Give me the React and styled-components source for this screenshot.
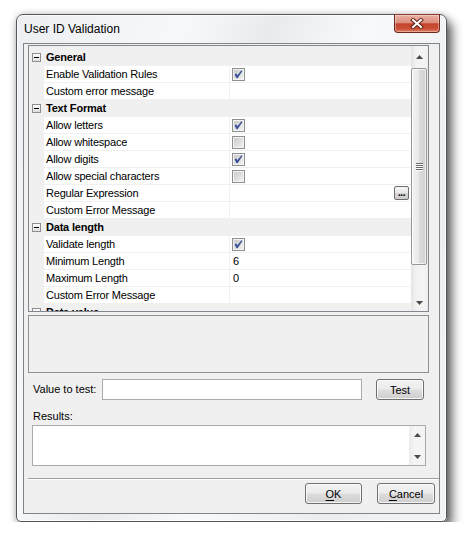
import React from "react";
import styled, { createGlobalStyle } from "styled-components";

const GlobalStyle = createGlobalStyle`
  html, body {
    margin: 0;
    background: #ffffff;
  }
  body {
    font-family: "Liberation Sans", Arial, sans-serif;
    font-size: 11px;
    color: #000;
  }
  * {
    box-sizing: border-box;
  }
`;

const sections = [
  {
    title: "General",
    rows: [
      { name: "Enable Validation Rules", type: "check", checked: true },
      { name: "Custom error message" },
    ],
  },
  {
    title: "Text Format",
    rows: [
      { name: "Allow letters", type: "check", checked: true },
      { name: "Allow whitespace", type: "check", checked: false },
      { name: "Allow digits", type: "check", checked: true },
      { name: "Allow special characters", type: "check", checked: false },
      { name: "Regular Expression", type: "ellipsis" },
      { name: "Custom Error Message" },
    ],
  },
  {
    title: "Data length",
    rows: [
      { name: "Validate length", type: "check", checked: true },
      { name: "Minimum Length", value: "6" },
      { name: "Maximum Length", value: "0" },
      { name: "Custom Error Message" },
    ],
  },
  { title: "Data value", rows: [] },
];

function CheckBox({ checked }) {
  return (
    <svg width="13" height="13" viewBox="0 0 13 13">
      <defs>
        <linearGradient id="cbg" x1="0" y1="0" x2="1" y2="1">
          <stop offset="0" stopColor="#cbcbcb" />
          <stop offset="1" stopColor="#f0f0f0" />
        </linearGradient>
      </defs>
      <rect x="0.5" y="0.5" width="12" height="12" fill="#f4f4f4" stroke="#8e8f8f" />
      <rect x="2" y="2" width="9" height="9" fill="url(#cbg)" />
      {checked && (
        <path d="M2.6 6.4 L4.2 5.2 L5.4 7.2 L9.4 2.2 L10.4 3 L5.6 10.2 L4.6 10.2 Z" fill="#3b4f9a" />
      )}
    </svg>
  );
}

function MinusBox() {
  return (
    <svg width="9" height="9" viewBox="0 0 9 9">
      <defs>
        <linearGradient id="mbg" x1="0" y1="0" x2="0" y2="1">
          <stop offset="0" stopColor="#ffffff" />
          <stop offset="1" stopColor="#dcdcdc" />
        </linearGradient>
      </defs>
      <rect x="0.5" y="0.5" width="8" height="8" fill="url(#mbg)" stroke="#8f8f8f" />
      <line x1="2" y1="4.5" x2="7" y2="4.5" stroke="#000" />
    </svg>
  );
}

function Arrow({ down }) {
  return (
    <svg width="7" height="4" viewBox="0 0 7 4">
      <polygon points={down ? "0,0 7,0 3.5,4" : "3.5,0 7,4 0,4"} fill="#4a4a4a" />
    </svg>
  );
}

export default function App() {
  return (
    <>
      <GlobalStyle />
      <Page>
        <Window>
          <TitleBar>
            <Title>User ID Validation</Title>
            <CloseButton>
              <svg width="14" height="11" viewBox="0 0 14 11">
                <path d="M3 2 L11 9 M11 2 L3 9" stroke="#5e2218" strokeWidth="4" strokeLinecap="square" />
                <path d="M3 2 L11 9 M11 2 L3 9" stroke="#ffffff" strokeWidth="2" strokeLinecap="square" />
              </svg>
            </CloseButton>
          </TitleBar>
          <Client>
            <Grid>
              <GridBody>
                {sections.map((s) => (
                  <React.Fragment key={s.title}>
                    <CategoryRow>
                      <MinusBox />
                      <CategoryLabel>{s.title}</CategoryLabel>
                    </CategoryRow>
                    {s.rows.map((r) => (
                      <Row key={s.title + r.name}>
                        <Gutter />
                        <NameCell>{r.name}</NameCell>
                        <Divider />
                        <ValueCell>
                          {r.type === "check" && <CheckBox checked={r.checked} />}
                          {r.value && <ValueText>{r.value}</ValueText>}
                          {r.type === "ellipsis" && <EllipsisButton>...</EllipsisButton>}
                        </ValueCell>
                      </Row>
                    ))}
                  </React.Fragment>
                ))}
              </GridBody>
              <ScrollBar>
                <ScrollButton $h={21}>
                  <Arrow />
                </ScrollButton>
                <Thumb>
                  <Grip />
                  <Grip />
                  <Grip />
                  <Grip />
                </Thumb>
                <Track />
                <ScrollButton $h={17}>
                  <Arrow down />
                </ScrollButton>
              </ScrollBar>
            </Grid>
            <Description />
            <TestRow>
              <FieldLabel>Value to test:</FieldLabel>
              <TextBox />
              <Button $w={48} $ml={14}>Test</Button>
            </TestRow>
            <ResultsLabel>Results:</ResultsLabel>
            <ResultsBox>
              <ResultsScroll>
                <ScrollButton $h={17}>
                  <Arrow />
                </ScrollButton>
                <ScrollButton $h={17}>
                  <Arrow down />
                </ScrollButton>
              </ResultsScroll>
            </ResultsBox>
            <Separator />
            <ButtonRow>
              <Button $w={57}>
                <u>O</u>K
              </Button>
              <Button $w={58}>
                <u>C</u>ancel
              </Button>
            </ButtonRow>
          </Client>
        </Window>
      </Page>
    </>
  );
}

const Page = styled.div`
  padding: 14px 0 0 16px;
`;

const Window = styled.div`
  width: 431px;
  height: 508px;
  display: flex;
  flex-direction: column;
  border: 1px solid #50565c;
  border-radius: 7px 7px 5px 5px;
  background: linear-gradient(
    110deg,
    #eceff2 0%,
    #f7f8f9 28%,
    #e8ebee 42%,
    #f8f9fa 58%,
    #ebeef1 80%,
    #f3f4f6 100%
  );
  box-shadow: inset 0 0 0 1px rgba(255, 255, 255, 0.8),
    5px 7px 11px rgba(0, 0, 0, 0.62), 0 0 7px rgba(0, 0, 0, 0.2);
`;

const TitleBar = styled.div`
  height: 28px;
  display: flex;
  align-items: flex-start;
  justify-content: space-between;
  padding-left: 7px;
`;

const Title = styled.div`
  font-size: 12px;
  line-height: 28px;
  color: #000;
`;

const CloseButton = styled.div`
  width: 46px;
  height: 19px;
  margin-top: -1px;
  margin-right: 6px;
  display: flex;
  align-items: center;
  justify-content: center;
  border: 1px solid #6f2a20;
  border-top-color: #8a3b2e;
  border-radius: 0 0 4px 4px;
  background: linear-gradient(
    #eab0a3 0%,
    #dc8e7d 45%,
    #c4432d 52%,
    #cb5036 80%,
    #e07d62 100%
  );
  box-shadow: inset 0 0 0 1px rgba(255, 255, 255, 0.35);
`;

const Client = styled.div`
  flex: 1;
  margin: 0 6px 7px;
  display: flex;
  flex-direction: column;
  padding: 1px 0 0 4px;
  border: 1px solid #7f858b;
  background: #f0f0f0;
`;

const Grid = styled.div`
  width: 401px;
  height: 267px;
  display: flex;
  border: 1px solid #828790;
  background: #f0f0f0;
`;

const GridBody = styled.div`
  flex: 1;
  overflow: hidden;
  padding-top: 3px;
  letter-spacing: -0.2px;
`;

const CategoryRow = styled.div`
  height: 17px;
  display: flex;
  align-items: center;
  padding-left: 3px;
  background: #f0f0f0;
  border-bottom: 1px solid #f0f0f0;

  svg {
    flex-shrink: 0;
  }
`;

const CategoryLabel = styled.span`
  margin-left: 5px;
  font-weight: bold;
  line-height: 16px;
`;

const Row = styled.div`
  height: 17px;
  display: flex;
  border-bottom: 1px solid #f0f0f0;
`;

const Gutter = styled.div`
  width: 15px;
  background: #f0f0f0;
`;

const NameCell = styled.div`
  width: 185px;
  padding-left: 2px;
  line-height: 16px;
  background: #ffffff;
  white-space: nowrap;
`;

const Divider = styled.div`
  width: 1px;
  background: #f0f0f0;
`;

const ValueCell = styled.div`
  flex: 1;
  display: flex;
  align-items: center;
  padding-left: 2px;
  background: #ffffff;
`;

const ValueText = styled.span`
  padding-left: 1px;
  line-height: 16px;
`;

const EllipsisButton = styled.div`
  margin-left: auto;
  margin-right: 2px;
  width: 15px;
  height: 14px;
  border: 1px solid #6e6e6e;
  border-radius: 2px;
  background: linear-gradient(#f6f6f6, #e6e6e6 50%, #d6d6d6 51%, #cbcbcb);
  font-weight: bold;
  font-size: 10px;
  line-height: 12px;
  text-align: center;
  letter-spacing: -0.5px;
`;

const ScrollBar = styled.div`
  width: 17px;
  display: flex;
  flex-direction: column;
  background: linear-gradient(to right, #e4e4e4, #f2f2f2 30%, #f4f4f4 80%, #ececec);
`;

const ScrollButton = styled.div`
  height: ${(p) => p.$h}px;
  display: flex;
  align-items: center;
  justify-content: center;
  flex-shrink: 0;
`;

const Thumb = styled.div`
  height: 197px;
  margin: 1px 1px 0 0;
  display: flex;
  flex-direction: column;
  align-items: center;
  justify-content: center;
  gap: 1px;
  border: 1px solid #979797;
  border-radius: 2px;
  background: linear-gradient(to right, #f4f4f4 0%, #e9e9e9 45%, #dadada 55%, #d0d0d0 100%);
  box-shadow: inset 0 0 0 1px rgba(255, 255, 255, 0.7);
`;

const Grip = styled.div`
  width: 7px;
  height: 1px;
  background: #6a6a6a;
  box-shadow: 0 1px 0 #ffffff;
`;

const Track = styled.div`
  flex: 1;
`;

const Description = styled.div`
  width: 401px;
  height: 58px;
  margin-top: 3px;
  border: 1px solid #8c9096;
  background: #f0f0f0;
`;

const TestRow = styled.div`
  margin-top: 6px;
  display: flex;
  align-items: center;
  padding-left: 5px;
`;

const FieldLabel = styled.span`
  width: 69px;
  line-height: 13px;
`;

const TextBox = styled.div`
  width: 260px;
  height: 21px;
  border: 1px solid #a9abb0;
  background: #ffffff;
`;

const Button = styled.div`
  width: ${(p) => p.$w}px;
  height: 21px;
  margin-left: ${(p) => p.$ml || 0}px;
  display: flex;
  align-items: center;
  justify-content: center;
  border: 1px solid #707070;
  border-radius: 3px;
  background: linear-gradient(#f2f2f2 0%, #ebebeb 48%, #dddddd 52%, #cfcfcf 100%);
  box-shadow: inset 0 0 0 1px rgba(252, 252, 252, 0.8);
  font-size: 11px;

  u {
    text-decoration-thickness: 1px;
    text-underline-offset: 2px;
  }
`;

const ResultsLabel = styled.div`
  margin-top: 10px;
  padding-left: 5px;
  line-height: 13px;
`;

const ResultsBox = styled.div`
  width: 394px;
  height: 41px;
  margin: 2px 0 0 4px;
  display: flex;
  justify-content: flex-end;
  border: 1px solid #a9abb0;
  background: #ffffff;
`;

const ResultsScroll = styled.div`
  width: 16px;
  display: flex;
  flex-direction: column;
  justify-content: space-between;
  background: linear-gradient(to right, #ececec, #f5f5f5 40%, #f3f3f3);
`;

const Separator = styled.div`
  height: 2px;
  margin-top: 12px;
  border-top: 1px solid #a0a0a0;
  border-bottom: 1px solid #ffffff;
`;

const ButtonRow = styled.div`
  margin-top: 3px;
  display: flex;
  justify-content: flex-end;
  gap: 15px;
  padding-right: 4px;
`;
